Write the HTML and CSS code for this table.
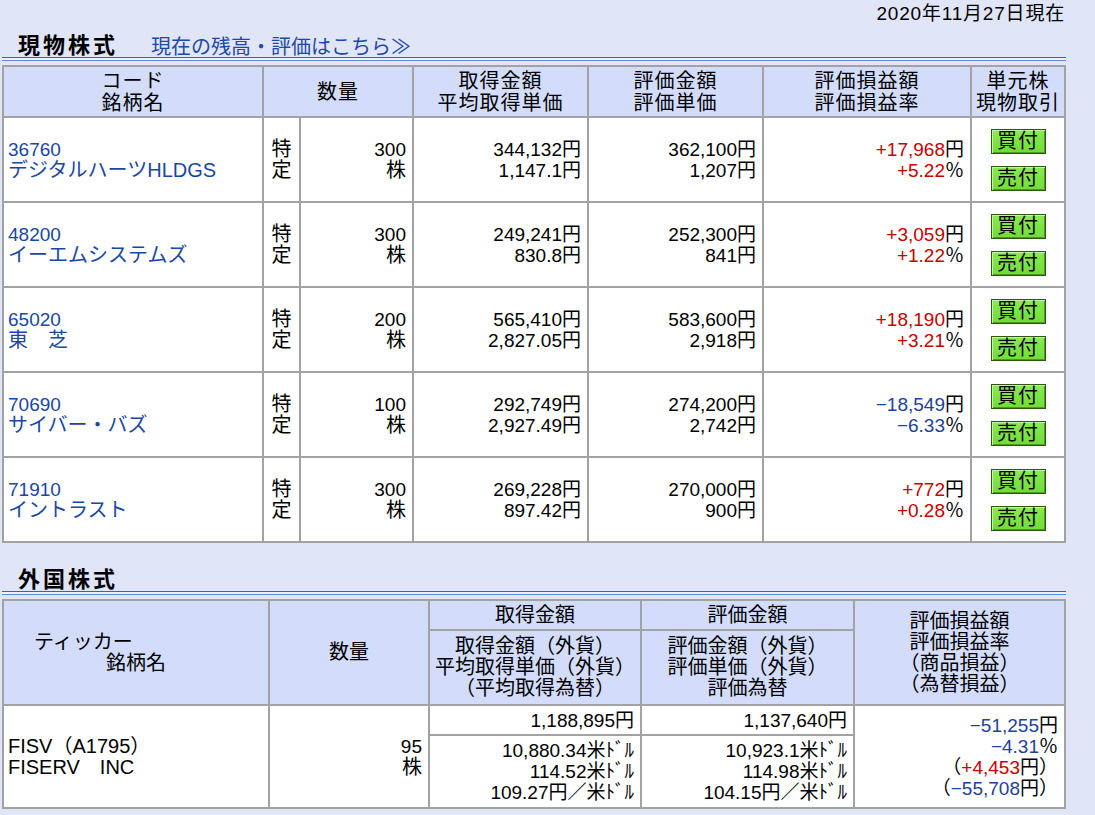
FILE: index.html
```html
<!DOCTYPE html>
<html lang="ja">
<head>
<meta charset="utf-8">
<title>保有証券</title>
<link rel="stylesheet" href="styles.css">
</head>
<body>
<div class="page">
  <div class="asof">2020年11月27日現在</div>

  <div class="sec-head">
    <h2 class="sec-title">現物株式</h2>
    <a class="sec-link" href="#">現在の残高・評価はこちら≫</a>
  </div>
  <div class="rule"></div>

  <table class="grid spot">
    <colgroup>
      <col class="s1"><col class="s2"><col class="s3"><col class="s4"><col class="s5"><col class="s6"><col class="s7">
    </colgroup>
    <thead>
      <tr>
        <th class="hcell">コード<br>銘柄名</th>
        <th class="hcell" colspan="2">数量</th>
        <th class="hcell">取得金額<br>平均取得単価</th>
        <th class="hcell">評価金額<br>評価単価</th>
        <th class="hcell">評価損益額<br>評価損益率</th>
        <th class="hcell">単元株<br>現物取引</th>
      </tr>
    </thead>
    <tbody>
      <tr>
        <td class="bcell name"><a class="code-link" href="#"><span class="n">36760</span><br>デジタルハーツHLDGS</a></td>
        <td class="bcell acct">特<br>定</td>
        <td class="bcell r"><span class="n">300</span><br>株</td>
        <td class="bcell r n">344,132円<br>1,147.1円</td>
        <td class="bcell r n">362,100円<br>1,207円</td>
        <td class="bcell r n"><span class="up">+17,968</span>円<br><span class="up">+5.22</span>％</td>
        <td class="bcell trade"><div class="btns"><a class="btn" href="#">買付</a><a class="btn" href="#">売付</a></div></td>
      </tr>
      <tr>
        <td class="bcell name"><a class="code-link" href="#"><span class="n">48200</span><br>イーエムシステムズ</a></td>
        <td class="bcell acct">特<br>定</td>
        <td class="bcell r"><span class="n">300</span><br>株</td>
        <td class="bcell r n">249,241円<br>830.8円</td>
        <td class="bcell r n">252,300円<br>841円</td>
        <td class="bcell r n"><span class="up">+3,059</span>円<br><span class="up">+1.22</span>％</td>
        <td class="bcell trade"><div class="btns"><a class="btn" href="#">買付</a><a class="btn" href="#">売付</a></div></td>
      </tr>
      <tr>
        <td class="bcell name"><a class="code-link" href="#"><span class="n">65020</span><br>東　芝</a></td>
        <td class="bcell acct">特<br>定</td>
        <td class="bcell r"><span class="n">200</span><br>株</td>
        <td class="bcell r n">565,410円<br>2,827.05円</td>
        <td class="bcell r n">583,600円<br>2,918円</td>
        <td class="bcell r n"><span class="up">+18,190</span>円<br><span class="up">+3.21</span>％</td>
        <td class="bcell trade"><div class="btns"><a class="btn" href="#">買付</a><a class="btn" href="#">売付</a></div></td>
      </tr>
      <tr>
        <td class="bcell name"><a class="code-link" href="#"><span class="n">70690</span><br>サイバー・バズ</a></td>
        <td class="bcell acct">特<br>定</td>
        <td class="bcell r"><span class="n">100</span><br>株</td>
        <td class="bcell r n">292,749円<br>2,927.49円</td>
        <td class="bcell r n">274,200円<br>2,742円</td>
        <td class="bcell r n"><span class="down">−18,549</span>円<br><span class="down">−6.33</span>％</td>
        <td class="bcell trade"><div class="btns"><a class="btn" href="#">買付</a><a class="btn" href="#">売付</a></div></td>
      </tr>
      <tr>
        <td class="bcell name"><a class="code-link" href="#"><span class="n">71910</span><br>イントラスト</a></td>
        <td class="bcell acct">特<br>定</td>
        <td class="bcell r"><span class="n">300</span><br>株</td>
        <td class="bcell r n">269,228円<br>897.42円</td>
        <td class="bcell r n">270,000円<br>900円</td>
        <td class="bcell r n"><span class="up">+772</span>円<br><span class="up">+0.28</span>％</td>
        <td class="bcell trade"><div class="btns"><a class="btn" href="#">買付</a><a class="btn" href="#">売付</a></div></td>
      </tr>
    </tbody>
  </table>

  <div class="sec-head sec-head-2">
    <h2 class="sec-title">外国株式</h2>
  </div>
  <div class="rule"></div>

  <table class="grid foreign">
    <colgroup>
      <col class="f1"><col class="f2"><col class="f3"><col class="f4"><col class="f5">
    </colgroup>
    <thead>
      <tr class="fh1">
        <th class="hcell ticker" rowspan="2"><span class="tk1">ティッカー</span>銘柄名</th>
        <th class="hcell" rowspan="2">数量</th>
        <th class="hcell">取得金額</th>
        <th class="hcell">評価金額</th>
        <th class="hcell" rowspan="2">評価損益額<br>評価損益率<br>（商品損益）<br>（為替損益）</th>
      </tr>
      <tr class="fh2">
        <th class="hcell">取得金額（外貨）<br>平均取得単価（外貨）<br>（平均取得為替）</th>
        <th class="hcell">評価金額（外貨）<br>評価単価（外貨）<br>評価為替</th>
      </tr>
    </thead>
    <tbody>
      <tr class="fb1">
        <td class="bcell name" rowspan="2">FISV（A1795）<br>FISERV　INC</td>
        <td class="bcell r" rowspan="2"><span class="n">95</span><br>株</td>
        <td class="bcell r n">1,188,895円</td>
        <td class="bcell r n">1,137,640円</td>
        <td class="bcell r n" rowspan="2"><span class="down">−51,255</span>円<br><span class="down">−4.31</span>％<br>（<span class="up">+4,453</span>円）<br>（<span class="down">−55,708</span>円）</td>
      </tr>
      <tr class="fb2">
        <td class="bcell r n">10,880.34米ﾄﾞﾙ<br>114.52米ﾄﾞﾙ<br>109.27円／米ﾄﾞﾙ</td>
        <td class="bcell r n">10,923.1米ﾄﾞﾙ<br>114.98米ﾄﾞﾙ<br>104.15円／米ﾄﾞﾙ</td>
      </tr>
    </tbody>
  </table>
</div>
</body>
</html>
```

FILE: styles.css
```css
* {
  box-sizing: border-box;
}

html,
body {
  margin: 0;
  padding: 0;
}

body {
  width: 1095px;
  height: 815px;
  overflow: hidden;
  background: #e1e5f8;
  color: #000;
  font-family: "Liberation Sans", "Noto Sans CJK JP", sans-serif;
  font-size: 20px;
  line-height: 21px;
}

.page {
  width: 1064px;
  margin-left: 2px;
}

.asof {
  text-align: right;
  font-size: 19px;
  line-height: 21px;
  letter-spacing: 0.8px;
  padding-top: 3px;
  padding-right: 1px;
}

.sec-head {
  display: flex;
  align-items: flex-end;
  height: 33px;
  padding-left: 16px;
}

.sec-head-2 {
  margin-top: 15px;
}

.sec-title {
  margin: 0;
  font-size: 22px;
  line-height: 22px;
  font-weight: bold;
  letter-spacing: 3px;
}

.sec-link {
  margin-left: 33px;
  font-size: 20px;
  line-height: 20px;
  color: #1b4aa6;
  text-decoration: none;
}

.rule {
  height: 4px;
  border-top: 1px solid #2d62d2;
  border-bottom: 1px solid #5a8ae2;
  background: #eef0fb;
  margin-bottom: 4px;
}

.grid {
  border-collapse: separate;
  border-spacing: 0;
  table-layout: fixed;
  width: 1064px;
  border-top: 2px solid #a2a2a2;
  border-left: 2px solid #a2a2a2;
  background: #fff;
}

.hcell,
.bcell {
  border-right: 2px solid #a2a2a2;
  border-bottom: 2px solid #a2a2a2;
  vertical-align: middle;
}

.hcell {
  padding: 0 2px;
  background: #d3ddfb;
  font-weight: normal;
  text-align: center;
  white-space: nowrap;
}

.bcell {
  padding: 0 5px;
}

.spot .hcell {
  height: 51px;
  line-height: 22px;
  letter-spacing: 1px;
}

.spot .bcell {
  height: 85px;
}

.s1 { width: 260px; }
.s2 { width: 37px; }
.s3 { width: 113px; }
.s4 { width: 175px; }
.s5 { width: 175px; }
.s6 { width: 208px; }
.s7 { width: 94px; }

.f1 { width: 266px; }
.f2 { width: 160px; }
.f3 { width: 212px; }
.f4 { width: 213px; }
.f5 { width: 211px; }

.name {
  text-align: left;
  padding-left: 4px;
  white-space: nowrap;
}

.code-link {
  color: #1a46a6;
  text-decoration: none;
}

.acct {
  text-align: center;
  padding: 0;
}

.r {
  text-align: right;
  padding-right: 6px;
  white-space: nowrap;
}

.n {
  font-size: 19px;
}

.up {
  color: #c80000;
}

.down {
  color: #23409e;
}

.trade {
  padding: 0;
}

.btns {
  display: flex;
  flex-direction: column;
  align-items: center;
  gap: 12px;
}

.btn {
  display: block;
  width: 55px;
  height: 25px;
  border: 1px solid #2a5a0c;
  background: linear-gradient(#8aea52, #70dc38);
  box-shadow: inset 1px 1px 0 #c4f5a4, inset -1px -1px 0 #4c9a22;
  color: #000;
  text-decoration: none;
  text-align: center;
  font-size: 20px;
  line-height: 23px;
  letter-spacing: 1px;
}

.foreign .hcell {
  line-height: 21px;
}

.fh1 .hcell {
  height: 30px;
}

.fh2 .hcell {
  height: 75px;
}

.fb1 .bcell {
  height: 30px;
}

.fb2 .bcell {
  height: 73px;
}

.ticker {
  text-align: center;
}

.tk1 {
  display: block;
  text-align: left;
  padding-left: 28px;
}
```
